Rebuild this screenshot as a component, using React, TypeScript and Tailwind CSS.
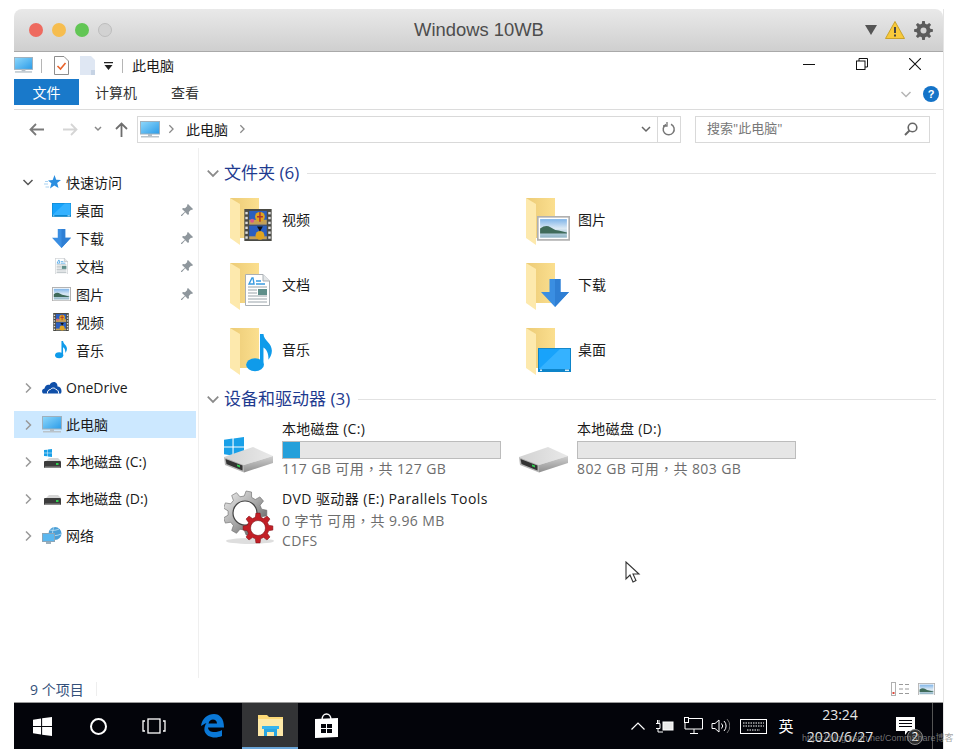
import { Fragment } from "react";

const cjk = "font-['Open_Sans','Noto_Sans_CJK_SC',sans-serif]";

const gearPoints = (cx: number, cy: number, ro: number, ri: number, teeth: number) => {
  const pts: string[] = [];
  for (let i = 0; i < teeth; i++) {
    const a = (i / teeth) * Math.PI * 2;
    const s = (Math.PI * 2) / teeth;
    [[-0.32, ri], [-0.18, ro], [0.18, ro], [0.32, ri]].forEach(([o, r]) => {
      pts.push(`${(cx + Math.cos(a + o * s) * r).toFixed(1)},${(cy + Math.sin(a + o * s) * r).toFixed(1)}`);
    });
  }
  return pts.join(" ");
};

const Monitor = ({ w = 20 }: { w?: number }) => (
  <svg width={w} height={w * 0.85} viewBox="0 0 20 17">
    <defs>
      <linearGradient id="scr" x1="0" y1="0" x2="1" y2="1">
        <stop offset="0" stopColor="#8fd8fb" />
        <stop offset="1" stopColor="#2a9be8" />
      </linearGradient>
    </defs>
    <rect x="0.5" y="0.5" width="19" height="12.5" fill="url(#scr)" stroke="#9fb0bc" />
    <rect x="8" y="13" width="4" height="2" fill="#b4bec6" />
    <rect x="1" y="15" width="18" height="1.5" fill="#b9c3ca" />
  </svg>
);

const Film = ({ w = 17 }: { w?: number }) => (
  <svg width={w} height={w * 1.15} viewBox="0 0 28 33">
    <rect width="28" height="33" fill="#4a4a44" />
    <rect x="5" y="2" width="18" height="14" fill="#2b5fc0" />
    <rect x="5" y="17" width="18" height="14" fill="#2b5fc0" />
    <rect x="5" y="11" width="18" height="5" fill="#c5a055" />
    <rect x="5" y="28" width="18" height="3" fill="#c5a055" />
    <circle cx="16" cy="8" r="5" fill="#e0a520" />
    <path d="M13 8h6M16 3v10" stroke="#a33" strokeWidth="1.5" />
    <circle cx="16" cy="27" r="4.5" fill="#e0a520" />
    <path d="M13 18h6l-3 5z" fill="#111" />
    <circle cx="8" cy="12" r="2" fill="#d8578a" />
    {[3, 8, 13, 18, 23, 28].map((y) => (
      <Fragment key={y}>
        <rect x="1" y={y} width="2.5" height="2.5" fill="#ddd" />
        <rect x="24.5" y={y} width="2.5" height="2.5" fill="#ddd" />
      </Fragment>
    ))}
  </svg>
);

const Doc = ({ w = 15 }: { w?: number }) => (
  <svg width={w} height={w * 1.28} viewBox="0 0 25 32">
    <path d="M.5.5H18L24.5 7v24.5H.5z" fill="#fff" stroke="#aab0b5" />
    <path d="M18 .5V7h6.5" fill="#e3e6e8" stroke="#aab0b5" />
    <path d="M4 10l3-6h1l1 6zM11 7h5M11 10h9" stroke="#3a9be0" strokeWidth="1.4" fill="none" />
    <path d="M3 13h19M3 16h9M3 19h9M3 22h19M3 25h19M3 28h19" stroke="#9aa4aa" strokeWidth="1.2" />
    <rect x="13" y="15" width="9" height="6" fill="#5f8f8a" />
  </svg>
);

const Pic = ({ w = 19 }: { w?: number }) => (
  <svg width={w} height={w * 0.75} viewBox="0 0 32 24">
    <defs>
      <linearGradient id="sky" x1="0" y1="0" x2="0" y2="1">
        <stop offset="0" stopColor="#7fb4e8" />
        <stop offset="0.5" stopColor="#dbe9f4" />
        <stop offset="1" stopColor="#8fb4c4" />
      </linearGradient>
    </defs>
    <rect x="0.8" y="0.8" width="30.4" height="22.4" fill="#fff" stroke="#b0b0b0" strokeWidth="1.6" />
    <rect x="3" y="3" width="26" height="18" fill="url(#sky)" />
    <path d="M3 12q6-4 10-1t8 3l8 2v1H3z" fill="#3f6b5a" />
  </svg>
);

const Note = ({ w = 14 }: { w?: number }) => (
  <svg width={w} height={w * 1.45} viewBox="0 0 26 38">
    <ellipse cx="9" cy="31" rx="9" ry="6.5" fill="#0f9bea" />
    <path d="M14 31V0h3.5c.5 7 8.5 9 8.5 17 0 4-2 7-3.5 9 .5-6-2-11-5-12.5V31z" fill="#0f9bea" />
  </svg>
);

const DownArrow = ({ w = 19 }: { w?: number }) => (
  <svg width={w} height={w} viewBox="0 0 28 28">
    <path d="M8.5 0h11v13H28L14 28 0 13h8.5z" fill="#3a8ee2" />
    <path d="M14 0h5.500v13H28L14 28z" fill="#2f7fd4" />
  </svg>
);

const Desktop = ({ w = 19 }: { w?: number }) => (
  <svg width={w} height={w * 0.73} viewBox="0 0 33 24">
    <rect width="33" height="24" fill="#0d84c9" />
    <rect x="1" y="1" width="31" height="20" fill="#18a3fb" />
    <path d="M1 21 22 1h10v20z" fill="#35b2ff" />
    <rect x="2" y="21.500" width="2" height="1.500" fill="#d5eefc" />
    <rect x="27" y="21.500" width="4" height="1.500" fill="#d5eefc" />
  </svg>
);

const Hdd = ({ w = 50 }: { w?: number }) => (
  <svg width={w} height={w * 0.52} viewBox="0 0 50 26">
    <defs>
      <linearGradient id="hddtop" x1="0" y1="0" x2="1" y2="0">
        <stop offset="0" stopColor="#d2d2d2" />
        <stop offset="1" stopColor="#e9e9e9" />
      </linearGradient>
      <linearGradient id="hddside" x1="0" y1="0" x2="0" y2="1">
        <stop offset="0" stopColor="#d0d0d0" />
        <stop offset="1" stopColor="#8e8e8e" />
      </linearGradient>
    </defs>
    <path d="M0 10 29 0l20 9-29 9z" fill="url(#hddtop)" />
    <path d="M20 18l29-9v7l-29 9.500z" fill="url(#hddside)" />
    <path d="M0 10l20 8v7.500L1 18z" fill="#b5b5b5" />
    <path d="M1.500 12l17 6.500v5L2.500 17z" fill="#333" />
    <path d="M13 17.500l3 1.100v1.800l-3-1.100z" fill="#30d050" />
  </svg>
);

// flat little drive used in the tree
const SmallHdd = () => (
  <svg width="17" height="10" viewBox="0 0 17 10">
    <path d="M2 3 5 0h9l3 3z" fill="#d6d6d6" />
    <rect y="3" width="17" height="7" rx="1" fill="#3c3c3c" />
    <rect x="1" y="8.500" width="15" height="1.500" fill="#8a8a8a" />
    <rect x="12" y="5" width="2.500" height="2" fill="#30d050" />
  </svg>
);

const WinLogo = ({ size, color }: { size: number; color: string }) => (
  <svg width={size} height={size} viewBox="0 0 20 20" fill={color}>
    <path d="M0 2.800 8.500 1.600v7.900H0zM9.600 1.400 20 0v9.500H9.600zM0 10.600h8.500v7.800L0 17.200zM9.600 10.600H20V20L9.600 18.600z" />
  </svg>
);

const Gears = () => (
  <svg width="52" height="56" viewBox="0 0 52 56">
    <defs>
      <linearGradient id="gg" x1="0" y1="0" x2="1" y2="1">
        <stop offset="0" stopColor="#f0f0f0" />
        <stop offset="0.5" stopColor="#a8a8a8" />
        <stop offset="1" stopColor="#4d4d4d" />
      </linearGradient>
    </defs>
    <ellipse cx="26" cy="52" rx="24" ry="3" fill="#dedede" />
    <polygon points={gearPoints(21, 24, 22, 17, 9)} fill="url(#gg)" stroke="#666" strokeWidth="0.6" />
    <circle cx="21" cy="24" r="12" fill="#fff" stroke="#444" strokeWidth="1.200" />
    <polygon points={gearPoints(34, 39, 15, 11, 8)} fill="#c21f26" stroke="#7a1116" strokeWidth="0.5" />
    <circle cx="34" cy="39" r="7.500" fill="#fff" stroke="#7a1116" strokeWidth="0.6" />
  </svg>
);

const Star = () => (
  <svg width="17" height="15" viewBox="0 0 17 15">
    <path d="M10.500 0l1.700 4.800 4.800.3-3.800 3 1.300 5L10.300 10.500 6 13.500 7.400 8.300 4 5.400l4.700-.4z" fill="#2b8ee0" />
    <path d="M0 9h4M1 6.500h3M1.500 12H5" stroke="#a7d2f2" strokeWidth="1" />
  </svg>
);

const Cloud = () => (
  <svg width="20" height="13" viewBox="0 0 20 13">
    <path d="M1 12.500C-.5 11-.3 8 2.500 7.500 3 4.500 5.500 3 7.500 4 9 1 13-.5 15 3c.5 1 .5 2 .5 2.500 3 0 5 3.500 3.500 7z" fill="#0f4fa8" />
    <path d="M5.500 12.500c-.5-2 1-4 3-4 1-2 4.500-2 5.500 0 1.500 0 3 2 2.500 4" fill="none" stroke="#fff" strokeWidth="1" />
  </svg>
);

const NetIcon = () => (
  <svg width="20" height="18" viewBox="0 0 20 18">
    <circle cx="13" cy="6.500" r="6.500" fill="#4b9fd6" />
    <path d="M8 3c3 1 7 0 9-1M7 8c4 1 8 1 12-1M12 0c-2 4-2 9 1 13" stroke="#c6e6f7" strokeWidth="0.8" fill="none" />
    <rect x="0.500" y="6.500" width="12" height="8" fill="#5ab7ef" stroke="#8aa5b8" />
    <rect x="4" y="15" width="5" height="2" fill="#9db0bc" />
  </svg>
);

const Pin = () => (
  <svg width="12" height="12" viewBox="0 0 12 12" fill="#8f979d">
    <path d="M7 0l5 5-1 1-1-.3L7.800 8l.2 2-1 1-2.800-2.800L1 12l-1-.1.1-.9 3.800-3.200L1 5l1-1 2 .2L6.300 2 6 1z" />
  </svg>
);

const Chev = ({ open = false, className = "" }: { open?: boolean; className?: string }) => (
  <svg width="12" height="12" viewBox="0 0 12 12" fill="none" stroke="currentColor" strokeWidth="1.5" className={className}>
    {open ? <path d="M1.500 4 6 8.500 10.500 4" /> : <path d="M4 1.500 8.500 6 4 10.500" />}
  </svg>
);

const Folder = ({ children, overlay }: { children?: React.ReactNode; overlay: string }) => (
  <div className="relative w-[52px] h-[47px] shrink-0">
    <svg width="30" height="47" viewBox="0 0 30 47">
      <defs>
        <linearGradient id="fback" x1="0" y1="0" x2="1" y2="0">
          <stop offset="0" stopColor="#eccb76" />
          <stop offset="1" stopColor="#fbdf8f" />
        </linearGradient>
      </defs>
      <path d="M0 0h29v40H10z" fill="url(#fback)" />
      <path d="M0 0l10 6v41L0 40z" fill="#fde9ad" />
    </svg>
    <div className={`absolute flex ${overlay}`}>{children}</div>
  </div>
);

const folders = [
  ["视频", <Film w={28} />, "right-[10px] bottom-[4px]"],
  ["图片", <Pic w={33} />, "right-[8px] bottom-[4px]"],
  ["文档", <Doc w={25} />, "right-[12px] bottom-[4px]"],
  ["下载", <DownArrow w={28} />, "right-[9px] bottom-[3px]"],
  ["音乐", <Note w={26} />, "right-[10px] bottom-[3px]"],
  ["桌面", <Desktop w={33} />, "right-[7px] bottom-[3px]"],
] as const;

const quick = [
  ["桌面", <Desktop w={19} />, true],
  ["下载", <DownArrow w={19} />, true],
  ["文档", <Doc w={13} />, true],
  ["图片", <Pic w={19} />, true],
  ["视频", <Film w={16} />, false],
  ["音乐", <Note w={12} />, false],
] as const;

const tree = [
  ["OneDrive", <Cloud />, false],
  ["此电脑", <Monitor />, true],
  ["本地磁盘 (C:)", <div className="relative pt-[3px]"><SmallHdd /><div className="absolute -top-[6px] left-0"><WinLogo size={8} color="#19a0e8" /></div></div>, false],
  ["本地磁盘 (D:)", <div className="pt-[3px]"><SmallHdd /></div>, false],
  ["网络", <NetIcon />, false],
] as const;

// the comma sits mid-cell in the reference, the TC face draws it that way
const Comma = () => <span className="font-['Noto_Sans_CJK_TC',sans-serif]">，</span>;

const SectionHead = ({ title }: { title: string }) => (
  <div className="flex items-center h-5 pl-[7px] pr-[7px]">
    <Chev open className="text-[#8a8a8a] w-[14px] h-[14px]" />
    <span className="ml-[4px] text-[17px] leading-5 text-[#1e3a8f]">{title}</span>
    <div className="flex-1 h-px bg-[#e2e2e2] ml-2" />
  </div>
);

const DriveTile = ({ name, free, total, pct, logo }: { name: string; free: string; total: string; pct: number; logo?: boolean }) => (
  <div className="flex w-[295px]">
    <div className="relative w-[58px] h-[58px] shrink-0">
      {logo && <div className="absolute left-0 top-[17px]"><WinLogo size={20} color="#19a0e8" /></div>}
      <div className="absolute left-0 top-[27px]"><Hdd /></div>
    </div>
    <div>
      <div className="h-[18px] leading-[18px] text-[14px] text-[#1a1a1a] tracking-[0.3px]">{name}</div>
      <div className="mt-[3px] w-[219px] h-[18px] bg-[#e6e6e6] border border-[#bcbcbc]">
        <div className="h-full bg-[#26a0da]" style={{ width: `${pct}%` }} />
      </div>
      <div className="h-[18px] leading-[18px] text-[14px] text-[#6d6d6d] whitespace-nowrap tracking-[0.4px]">{free} 可用<Comma />共 {total}</div>
    </div>
  </div>
);

export default function App() {
  return (
    <div className={`relative w-[956px] h-[756px] bg-white pt-[9px] pl-[14px] overflow-hidden ${cjk}`}>
      <div className="w-[929px] h-[740px] flex flex-col bg-white text-[14px] text-[#1a1a1a] shadow-[1px_0_0_#e4e4e4]">
        {/* mac title bar */}
        <div className="h-[43px] shrink-0 rounded-t-lg bg-gradient-to-b from-[#e9e9e9] to-[#cfcfcf] border-b border-[#a9a9a9] flex items-center pl-[15px] pr-[10px]">
          <div className="flex gap-[9px] w-[385px]">
            <div className="w-[14px] h-[14px] rounded-full bg-[#ee6a5f]" />
            <div className="w-[14px] h-[14px] rounded-full bg-[#f6bd4f]" />
            <div className="w-[14px] h-[14px] rounded-full bg-[#62c655]" />
            <div className="w-[14px] h-[14px] rounded-full bg-[#d2d2d2] border border-[#bdbdbd]" />
          </div>
          <div className="w-[130px] text-center font-['Liberation_Sans',sans-serif] text-[18.400px] text-[#4d4d4d] whitespace-nowrap">Windows 10WB</div>
          <div className="ml-auto flex items-center">
            <svg width="12" height="10" viewBox="0 0 12 10" fill="#555"><path d="M0 0h12L6 10z" /></svg>
            <svg width="20" height="18" viewBox="0 0 20 18" className="ml-[8px]">
              <path d="M10 .5 19.500 17.500H.5z" fill="#f8c93a" stroke="#c9a22a" />
              <path d="M9 6h2v6H9zM9 13.500h2v2H9z" fill="#444" />
            </svg>
            <svg width="19" height="19" viewBox="0 0 19 19" className="ml-[9px]">
              <polygon points={gearPoints(9.500, 9.500, 9.500, 7, 8)} fill="#5c5c5c" />
              <circle cx="9.500" cy="9.500" r="3" fill="#d4d4d4" />
            </svg>
          </div>
        </div>

        {/* quick access toolbar */}
        <div className="h-[27px] shrink-0 flex items-center relative">
          <Monitor w={19} />
          <div className="w-px h-[14px] bg-[#b5b5b5] ml-[8px]" />
          <svg width="15" height="19" viewBox="0 0 15 19" className="ml-[12px]">
            <path d="M.5.5H10L14.500 5v13.500H.5z" fill="#fff" stroke="#8d8d8d" />
            <path d="M3.500 10l3 3 5-6" stroke="#e9632b" strokeWidth="1.600" fill="none" />
          </svg>
          <svg width="15" height="19" viewBox="0 0 15 19" className="ml-[11px]">
            <path d="M0 0h11l4 4v15H0z" fill="#dfe7f3" />
            <path d="M11 14h4v5h-4z" fill="#c6d3e4" />
          </svg>
          <svg width="9" height="8" viewBox="0 0 9 8" className="ml-[9px]">
            <path d="M0 0h9v1.200H0zM.5 3h8L4.500 8z" fill="#222" />
          </svg>
          <div className="w-px h-[14px] bg-[#b5b5b5] ml-[9px]" />
          <span className="ml-[9px]">此电脑</span>
          <div className="ml-auto mb-[3px] flex items-center text-[#111]">
            <div className="w-[12px] h-px bg-[#111]" />
            <svg width="12" height="12" viewBox="0 0 12 12" fill="none" stroke="#111" className="ml-[41px]">
              <rect x="0.500" y="3" width="8.500" height="8.500" />
              <path d="M3 3V.5h8.500V9H9" />
            </svg>
            <svg width="12" height="12" viewBox="0 0 12 12" stroke="#111" strokeWidth="1.100" className="ml-[41px] mr-[22px]">
              <path d="M0 0l12 12M12 0 0 12" />
            </svg>
          </div>
        </div>

        {/* ribbon tabs */}
        <div className="h-[31px] shrink-0 flex items-start border-b border-[#dcdcdc]">
          <div className="w-[65px] h-[26px] bg-[#1979ca] text-white flex items-center justify-center">文件</div>
          <div className="ml-[16px] h-[26px] flex items-center text-[#333]">计算机</div>
          <div className="ml-[34px] h-[26px] flex items-center text-[#333]">查看</div>
          <div className="ml-auto h-[26px] flex items-center pt-[4px]">
            <Chev open className="text-[#b5b5b5]" />
            <div className="ml-[11px] mr-[4px] w-[16px] h-[16px] rounded-full bg-[#1473c8] text-white text-[11px] font-bold flex items-center justify-center font-['Liberation_Sans',sans-serif]">?</div>
          </div>
        </div>

        {/* address row */}
        <div className="h-[38px] shrink-0 flex items-center">
          <svg width="15" height="13" viewBox="0 0 15 13" fill="none" stroke="#7a7a7a" strokeWidth="1.800" className="ml-[15px]"><path d="M15 6.500H1.500M7 1 1.500 6.500 7 12" /></svg>
          <svg width="15" height="13" viewBox="0 0 15 13" fill="none" stroke="#d5d5d5" strokeWidth="1.800" className="ml-[19px]"><path d="M0 6.500h13.500M8 1l5.500 5.500L8 12" /></svg>
          <svg width="8" height="6" viewBox="0 0 8 6" fill="none" stroke="#888" strokeWidth="1.500" className="ml-[16px]"><path d="M1 1l3 3 3-3" /></svg>
          <svg width="13" height="15" viewBox="0 0 13 15" fill="none" stroke="#6e6e6e" strokeWidth="1.800" className="ml-[13px]"><path d="M6.500 15V1.500M1 7l5.500-5.500L12 7" /></svg>
          <div className="ml-[9px] w-[544px] h-[27px] border border-[#d9d9d9] flex items-center">
            <div className="ml-[2px] flex"><Monitor w={20} /></div>
            <Chev className="ml-[6px] text-[#888] w-[10px] h-[10px]" />
            <span className="ml-[10px]">此电脑</span>
            <Chev className="ml-[9px] text-[#888] w-[10px] h-[10px]" />
            <div className="ml-auto flex items-center h-full">
              <svg width="10" height="7" viewBox="0 0 10 7" fill="none" stroke="#666" strokeWidth="1.500"><path d="M1 1l4 4 4-4" /></svg>
              <div className="ml-[6px] w-px h-full bg-[#d9d9d9]" />
              <svg width="14" height="14" viewBox="0 0 14 14" fill="none" stroke="#777" strokeWidth="1.500" className="mx-[4px]">
                <path d="M4 2.500A5.500 5.500 0 1 0 9 2.300" />
                <path d="M5 0v4H1" strokeWidth="1.300" />
              </svg>
            </div>
          </div>
          <div className="ml-[14px] w-[235px] h-[27px] border border-[#d9d9d9] flex items-center px-[11px] text-[#777] text-[13px]">
            搜索"此电脑"
            <svg width="14" height="14" viewBox="0 0 14 14" fill="none" stroke="#666" strokeWidth="1.600" className="ml-auto">
              <circle cx="8.500" cy="5.500" r="4.300" />
              <path d="M5.500 8.500 1 13" strokeWidth="2" />
            </svg>
          </div>
        </div>

        {/* main */}
        <div className="flex-1 flex min-h-0">
          <div className="w-[185px] shrink-0 border-r border-[#efefef] pt-[20px]">
            <div className="h-[28px] flex items-center">
              <div className="w-[28px] flex justify-end"><Chev open className="text-[#555] translate-x-[-8px]" /></div>
              <div className="w-[24px] flex justify-center translate-x-[-2px]"><Star /></div>
              <span>快速访问</span>
            </div>
            {quick.map(([name, icon, pinned]) => (
              <div key={name} className="h-[28px] flex items-center pl-[37px] pr-[5px]">
                <div className="w-[25px] flex justify-center pr-[5px]">{icon}</div>
                <span>{name}</span>
                {pinned && <div className="ml-auto"><Pin /></div>}
              </div>
            ))}
            <div className="h-[5px]" />
            {tree.map(([name, icon, selected]) => (
              <div key={name} className="h-[37px] flex items-center">
                <div className={`w-[182px] h-[27px] flex items-center ${selected ? "bg-[#cce8ff]" : ""}`}>
                  <div className="w-[28px] flex justify-end"><Chev className="text-[#999] translate-x-[-8px]" /></div>
                  <div className="w-[24px] flex justify-center pr-[4px]">{icon}</div>
                  <span>{name}</span>
                </div>
              </div>
            ))}
          </div>

          <div className="flex-1 pt-[15px]">
            <SectionHead title="文件夹 (6)" />
            <div className="grid grid-cols-[296px_296px] gap-y-[18px] pl-[31px] mt-[15px]">
              {folders.map(([name, icon, overlay]) => (
                <div key={name} className="h-[47px] flex items-start">
                  <Folder overlay={overlay}>{icon}</Folder>
                  <span className="mt-[12px] leading-[20px] text-[14px]">{name}</span>
                </div>
              ))}
            </div>
            <div className="mt-[14px]"><SectionHead title="设备和驱动器 (3)" /></div>
            <div className="pl-[25px] mt-[11px]">
              <div className="flex">
                <DriveTile name="本地磁盘 (C:)" free="117 GB" total="127 GB" pct={8} logo />
                <DriveTile name="本地磁盘 (D:)" free="802 GB" total="803 GB" pct={0} />
              </div>
              <div className="flex mt-[11px]">
                <div className="w-[58px] shrink-0"><Gears /></div>
                <div className="text-[14px] leading-[20px] tracking-[0.4px]">
                  <div>DVD 驱动器 (E:) Parallels Tools</div>
                  <div className="text-[#6d6d6d] mt-px">0 字节 可用<Comma />共 9.96 MB</div>
                  <div className="text-[#6d6d6d]">CDFS</div>
                </div>
              </div>
            </div>
          </div>
        </div>

        {/* status bar */}
        <div className="h-[24px] shrink-0 flex items-center pl-[16px] pr-[8px] pb-[2px] text-[#33507a]">
          <span>9 个项目</span>
          <div className="w-px h-[14px] bg-[#eeeeee] ml-[12px]" />
          <div className="ml-auto flex items-center">
            <svg width="19" height="14" viewBox="0 0 19 14" fill="none" stroke="#9a9a9a">
              <rect x="0.500" y="0.500" width="4" height="13" stroke="#b0b0b0" />
              <path d="M8 2.500h4M14 2.500h4M8 7h4M14 7h4M8 11.500h4M14 11.500h4" />
              <rect x="1.500" y="10" width="2" height="2" fill="#e0483a" stroke="none" />
            </svg>
            <div className="ml-[8px] flex"><Pic w={17} /></div>
          </div>
        </div>

        {/* taskbar */}
        <div className="h-[47px] shrink-0 bg-[#03040a] border-t border-[#9a9a9a] flex items-stretch text-white">
          <div className="w-[56px] flex items-center justify-center"><WinLogo size={19} color="#fff" /></div>
          <div className="w-[56px] flex items-center justify-center">
            <div className="w-[17px] h-[17px] rounded-full border-[2.500px] border-white" />
          </div>
          <div className="w-[56px] flex items-center justify-center">
            <svg width="24" height="16" viewBox="0 0 24 16" fill="none" stroke="#fff" strokeWidth="1.300">
              <rect x="6" y="1" width="12" height="14" />
              <path d="M3 3H1v10h2M21 3h2v10h-2" />
            </svg>
          </div>
          <div className="w-[60px] flex items-center justify-center">
            <svg width="24" height="24" viewBox="0 0 24 24" fill="#0a78d7">
              <path d="M1 12C2 4 8 0 14 0c6 0 10 4.500 10 13.500H8c.3 5 7.500 6 14 2.500v6c-7 3-15.500 1.500-17.500-5C4 14 5 11 6.500 9 4 10 2 11.500 1 12zM8.500 9.500h8.500c0-5-7.500-5.500-8.500 0z" />
            </svg>
          </div>
          <div className="w-[56px] bg-[#333436] border-b-[2px] border-[#6aa5d8] flex items-center justify-center">
            <svg width="25" height="22" viewBox="0 0 25 22">
              <path d="M0 1h9l2 2h14v19H0z" fill="#fbd977" />
              <path d="M0 5h25v17H0z" fill="#fde9a8" />
              <path d="M6 22v-8h13v8h-3v-4H9v4z" fill="#2aa5e0" />
              <rect x="4" y="12" width="17" height="3" fill="#35b4ee" />
            </svg>
          </div>
          <div className="w-[56px] flex items-center justify-center">
            <svg width="25" height="26" viewBox="0 0 25 26">
              <path d="M8 7c0-8 9-8 9 0" fill="none" stroke="#fff" strokeWidth="1.500" />
              <path d="M1 6l23-1v19L1 25z" fill="#fff" />
              <path d="M7 11h5v4H7zM13 11h5v4h-5zM7 16h5v4H7zM13 16h5v4h-5z" fill="#03040a" />
            </svg>
          </div>

          <div className="ml-auto flex items-stretch pr-[4px] relative">
            <div className="w-[28px] flex items-center justify-center">
              <svg width="14" height="8" viewBox="0 0 14 8" fill="none" stroke="#fff" strokeWidth="1.200"><path d="M.5 7.500 7 1l6.500 6.500" /></svg>
            </div>
            <div className="w-[26px] flex items-center justify-center">
              <svg width="18" height="14" viewBox="0 0 18 14" fill="none" stroke="#fff">
                <rect x="7" y="3" width="10" height="8" fill="#e9e9e9" />
                <path d="M0 4.500h4v5H0M1.500 4.500V1M3 4.500V1M2 9.500V13h5" />
              </svg>
            </div>
            <div className="w-[30px] flex items-center justify-center">
              <svg width="19" height="18" viewBox="0 0 19 18" fill="none" stroke="#fff">
                <path d="M5 1.500h13.500V12H1V6" />
                <rect x="0.500" y="0.500" width="4" height="5" />
                <path d="M10 12v4M6 16.500h8" />
              </svg>
            </div>
            <div className="w-[24px] flex items-center justify-center">
              <svg width="19" height="16" viewBox="0 0 19 16" fill="none" stroke="#fff">
                <path d="M1 5.500h3L8 2v12L4 10.500H1z" />
                <path d="M10.500 5.500a3.500 3.500 0 0 1 0 5M13 3a7 7 0 0 1 0 10" />
                <path d="M16 1a10 10 0 0 1 0 14" stroke="#777" />
              </svg>
            </div>
            <div className="w-[42px] flex items-center justify-center">
              <svg width="27" height="15" viewBox="0 0 27 15" fill="none" stroke="#fff">
                <rect x="0.500" y="0.500" width="26" height="14" />
                <path d="M3 4h21M3 7h21M7 11h13" strokeDasharray="1.500 1" />
              </svg>
            </div>
            <div className="w-[24px] flex items-center justify-center text-[15px] text-white">英</div>
            <div className="w-[84px] flex flex-col items-center justify-center text-[14px] text-[#e8e8e8] leading-[22px]">
              <span>23:24</span>
              <span>2020/6/27</span>
            </div>
            <div className="relative w-[46px] flex items-center justify-center">
              <svg width="19" height="19" viewBox="0 0 19 19">
                <path d="M0 0h19v14h-7l-3 4v-4H0z" fill="#fff" />
                <path d="M3 3.500h13M3 6.500h13M3 9.500h13" stroke="#03040a" strokeWidth="1.200" />
              </svg>
              <div className="absolute right-[5px] bottom-[4px] w-[16px] h-[16px] rounded-full border border-[#888] bg-[#2c2c2c] text-[12px] leading-[14px] text-center text-white">2</div>
            </div>
          </div>
          <div className="w-px bg-[#555] mr-[10px]" />
        </div>
      </div>

      {/* mouse pointer on the desktop */}
      <svg width="16" height="24" viewBox="0 0 16 24" className="absolute left-[625px] top-[561px]" fill="#fff" stroke="#333" strokeWidth="1.100">
        <path d="M1 1v17l4-4 3 7 3-1.500-3-6.500h6z" />
      </svg>

      {/* watermark */}
      <div className="absolute left-[802px] top-[732px] font-['Liberation_Sans','Noto_Sans_CJK_SC',sans-serif] text-[9px] leading-[12px] text-[#8d8d8d]/80 whitespace-nowrap">https://blog.csdn.net/CommShare博客</div>
    </div>
  );
}
